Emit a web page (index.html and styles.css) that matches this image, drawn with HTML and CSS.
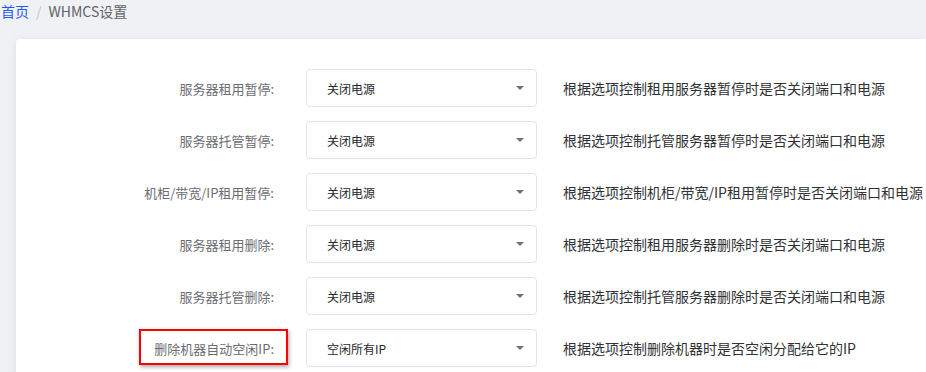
FILE: index.html
```html
<!DOCTYPE html>
<html lang="zh-CN">
  <head>
    <meta charset="UTF-8" />
    <meta name="viewport" content="width=device-width, initial-scale=1.0" />
    <title>WHMCS设置</title>
    <link rel="stylesheet" href="styles.css">
  </head>
  <body>
    <div class="crumbs">
      <a class="home" href="#">首页</a>
      <span class="sep">/</span>
      <span class="current">WHMCS设置</span>
    </div>
    <div class="card">
      <div class="row">
        <div class="label">服务器租用暂停:</div>
        <div class="select"><span>关闭电源</span><i class="caret"></i></div>
        <div class="tip">根据选项控制租用服务器暂停时是否关闭端口和电源</div>
      </div>
      <div class="row">
        <div class="label">服务器托管暂停:</div>
        <div class="select"><span>关闭电源</span><i class="caret"></i></div>
        <div class="tip">根据选项控制托管服务器暂停时是否关闭端口和电源</div>
      </div>
      <div class="row">
        <div class="label">机柜/带宽/IP租用暂停:</div>
        <div class="select"><span>关闭电源</span><i class="caret"></i></div>
        <div class="tip">根据选项控制机柜/带宽/IP租用暂停时是否关闭端口和电源</div>
      </div>
      <div class="row">
        <div class="label">服务器租用删除:</div>
        <div class="select"><span>关闭电源</span><i class="caret"></i></div>
        <div class="tip">根据选项控制租用服务器删除时是否关闭端口和电源</div>
      </div>
      <div class="row">
        <div class="label">服务器托管删除:</div>
        <div class="select"><span>关闭电源</span><i class="caret"></i></div>
        <div class="tip">根据选项控制托管服务器删除时是否关闭端口和电源</div>
      </div>
      <div class="row">
        <div class="label marked">删除机器自动空闲IP:</div>
        <div class="select"><span>空闲所有IP</span><i class="caret"></i></div>
        <div class="tip">根据选项控制删除机器时是否空闲分配给它的IP</div>
      </div>
    </div>
  </body>
</html>
```

FILE: styles.css
```css
body {
  margin: 0;
  padding: 0;
  background-color: #f0f1f5;
  font-family: "Noto Sans CJK SC", "Noto Sans", sans-serif;
  overflow: hidden;
  height: 372px;
}

.crumbs {
  height: 22px;
  display: flex;
  align-items: center;
  padding-left: 1px;
  font-size: 14px;
  line-height: 22px;
}
.crumbs .home {
  color: #1b5cff;
  text-decoration: none;
}
.crumbs .sep {
  color: #c0c4cc;
  margin: 0 7px;
}
.crumbs .current {
  color: #5f6268;
}

.card {
  margin: 17px 0 0 16px;
  padding: 30px 0 24px;
  background: #fff;
  border-radius: 4px 0 0 0;
  box-shadow: 0 2px 10px rgba(0, 0, 0, 0.08);
}

.row {
  display: flex;
  align-items: center;
  height: 38px;
  margin-bottom: 14px;
}
.row:last-child {
  margin-bottom: 0;
}

.label {
  position: relative;
  width: 258px;
  flex: none;
  text-align: right;
  font-size: 13px;
  color: #6b6d73;
  margin-right: 32px;
}
.label.marked::after {
  content: "";
  position: absolute;
  left: 123px;
  right: -14px;
  top: -10px;
  height: 32px;
  border: 2px solid #f00;
  box-shadow: 1px 2px 4px rgba(0, 0, 0, 0.35);
}

.select {
  box-sizing: border-box;
  width: 231px;
  height: 38px;
  flex: none;
  display: flex;
  align-items: center;
  justify-content: space-between;
  padding: 0 12px 0 20px;
  border: 1px solid #e1e4ea;
  border-radius: 4px;
  font-size: 12px;
  color: #25272b;
}
.caret {
  width: 0;
  height: 0;
  border-left: 4px solid transparent;
  border-right: 4px solid transparent;
  border-top: 4px solid #6e737a;
}

.tip {
  margin-left: 26px;
  font-size: 14px;
  color: #303236;
  white-space: nowrap;
}
```
